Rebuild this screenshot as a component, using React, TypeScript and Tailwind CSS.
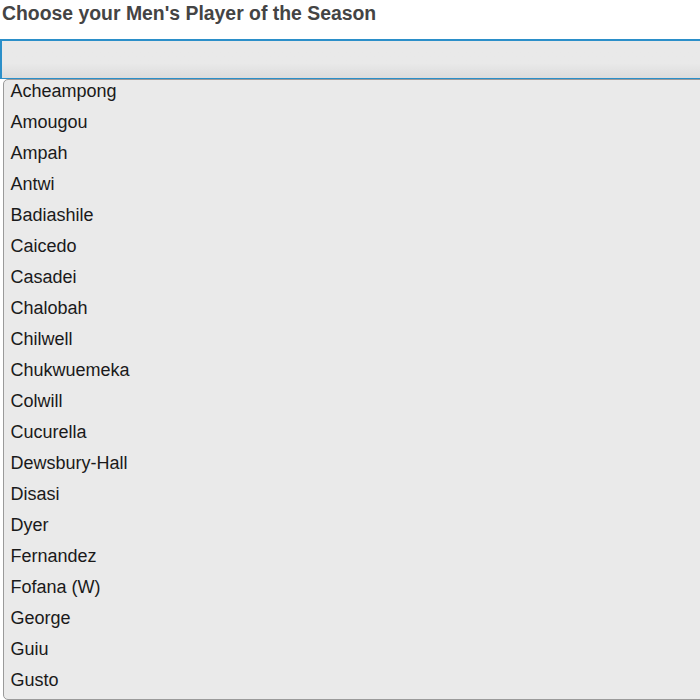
const players = [
  "Acheampong",
  "Amougou",
  "Ampah",
  "Antwi",
  "Badiashile",
  "Caicedo",
  "Casadei",
  "Chalobah",
  "Chilwell",
  "Chukwuemeka",
  "Colwill",
  "Cucurella",
  "Dewsbury-Hall",
  "Disasi",
  "Dyer",
  "Fernandez",
  "Fofana (W)",
  "George",
  "Guiu",
  "Gusto",
];

const App = () => {
  return (
    <div className="w-[700px] h-[700px] overflow-hidden bg-white font-['Liberation_Sans',Arial,sans-serif]">
      <h2 className="pl-[2px] pt-[2px] text-[19.4px] leading-[22px] font-bold text-[#444]">
        Choose your Men's Player of the Season
      </h2>
      <div className="mt-[15px] h-[40px] w-[720px] border-l-2 border-t-2 border-b border-[#2b8fc9] bg-gradient-to-b from-[#e9e9e9] from-60% to-[#dcdcdc]" />
      <ul className="ml-[3px] w-[720px] h-[621px] rounded-[5px] border border-[#9a9a9a] bg-[#eaeaea]">
        {players.map((p) => (
          <li
            key={p}
            className="h-[31px] pl-[6.5px] text-[18px] leading-[22px] text-[#1a1a1a]"
          >
            {p}
          </li>
        ))}
      </ul>
    </div>
  );
};

export default App;
